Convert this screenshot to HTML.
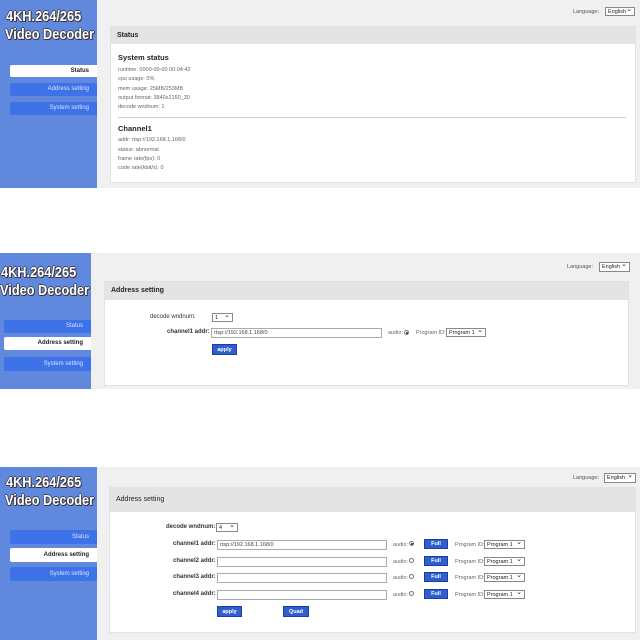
<!DOCTYPE html>
<html><head><meta charset="utf-8"><style>
*{margin:0;padding:0;box-sizing:border-box}
body{width:640px;height:640px;background:#fff;position:relative;overflow:hidden;font-family:"Liberation Sans",Arial,sans-serif;color:#333}
.a{position:absolute}
.shot{position:absolute;left:0;width:640px;background:#f0f0f0}
.side{position:absolute;left:0;top:0;bottom:0;background:#6088dc}
.ttl{position:absolute;color:#fff;font-weight:bold;font-size:14.5px;white-space:nowrap;transform:scaleX(0.88);transform-origin:0 0;text-shadow:1px 1px 0 #334,-1px 0 0 #445,0 -1px 0 #445,1px 0 0 #445,0 1px 0 #445}
.nav{position:absolute;background:#3d72e8;color:#dbe6ff;font-size:6px;text-align:right;padding-right:8px;border-radius:2px 0 0 2px}
.nav.on{background:#fff;color:#222;font-weight:bold}
.panel{position:absolute;background:#fff;border:1px solid #e2e2e2}
.hd{position:absolute;left:0;right:0;top:0;background:#e4e4e4;font-size:7px;font-weight:bold;color:#222;padding-left:6px}
.t{position:absolute;font-size:5.5px;color:#666;white-space:nowrap}
.lab{position:absolute;font-size:6px;color:#333;white-space:nowrap;text-align:right}
.inp{position:absolute;border:1px solid #aaa;background:#fff;font-size:5.5px;color:#444;padding-left:2px;line-height:8px}
.sel{position:absolute;border:1px solid #888;background:#fff;font-size:5.5px;color:#222;padding-left:2px;line-height:8px}
.sel:after{content:"⌄";position:absolute;right:2px;top:-2px;font-size:7px}
.btn{position:absolute;background:#2f5fcf;color:#fff;font-size:5.5px;font-weight:bold;text-align:center;border:1px solid #1d3f9a}
.rad{position:absolute;width:5px;height:5px;border:1px solid #777;border-radius:50%;background:#fff}
.rad.on:after{content:"";position:absolute;left:1px;top:1px;width:2px;height:2px;background:#222;border-radius:50%}
</style></head><body>

<!-- shot 1 -->
<div class="shot" style="top:0;height:188px">
 <div class="side" style="width:97px"></div>
 <div class="ttl" style="left:6px;top:9px">4KH.264/265</div>
 <div class="ttl" style="left:5px;top:27px">Video Decoder</div>
 <div class="nav on" style="left:10px;top:65px;width:87px;height:12px;line-height:12px">Status</div>
 <div class="nav" style="left:10px;top:83px;width:87px;height:13px;line-height:13px">Address setting</div>
 <div class="nav" style="left:10px;top:102px;width:87px;height:13px;line-height:13px">System setting</div>
 <div class="t" style="left:573px;top:9px;color:#555">Language:</div>
 <div class="sel" style="left:605px;top:7px;width:30px;height:9px">English</div>
 <div class="panel" style="left:110px;top:26px;width:526px;height:157px">
  <div class="hd" style="height:17px;line-height:17px">Status</div>
 </div>
 <div class="a" style="left:118px;top:53px;font-size:7.5px;font-weight:bold;color:#222">System status</div>
 <div class="t" style="left:118px;top:67px">runtime: 0000-00-00 00:04:42</div>
 <div class="t" style="left:118px;top:76px">cpu usage: 0%</div>
 <div class="t" style="left:118px;top:86px">mem usage: 25MB/253MB</div>
 <div class="t" style="left:118px;top:95px">output format: 3840x2160_30</div>
 <div class="t" style="left:118px;top:104px">decode wndnum: 1</div>
 <div class="a" style="left:118px;top:117px;width:508px;height:1px;background:#ccc"></div>
 <div class="a" style="left:118px;top:124px;font-size:7.5px;font-weight:bold;color:#222">Channel1</div>
 <div class="t" style="left:118px;top:137px">addr: rtsp://192.168.1.168/0</div>
 <div class="t" style="left:118px;top:147px">status: abnormal</div>
 <div class="t" style="left:118px;top:156px">frame rate(fps): 0</div>
 <div class="t" style="left:118px;top:165px">code rate(kbit/s): 0</div>
</div>

<!-- shot 2 -->
<div class="shot" style="top:253px;height:136px">
 <div class="side" style="width:91px"></div>
 <div class="ttl" style="left:1px;top:12px">4KH.264/265</div>
 <div class="ttl" style="left:0px;top:30px">Video Decoder</div>
 <div class="nav" style="left:4px;top:67px;width:87px;height:13px;line-height:13px">Status</div>
 <div class="nav on" style="left:4px;top:84px;width:87px;height:13px;line-height:13px">Address setting</div>
 <div class="nav" style="left:4px;top:104px;width:87px;height:14px;line-height:14px">System setting</div>
 <div class="t" style="left:567px;top:11px;color:#555">Language:</div>
 <div class="sel" style="left:599px;top:9px;width:31px;height:10px">English</div>
 <div class="panel" style="left:104px;top:28px;width:525px;height:105px">
  <div class="hd" style="height:18px;line-height:18px">Address setting</div>
 </div>
 <div class="lab" style="left:150px;top:61px">decode wndnum:</div>
 <div class="sel" style="left:212px;top:60px;width:21px;height:9px">1</div>
 <div class="lab" style="left:167px;top:76px;font-weight:bold">channel1 addr:</div>
 <div class="inp" style="left:211px;top:75px;width:171px;height:10px">rtsp://192.168.1.168/0</div>
 <div class="t" style="left:388px;top:77px">audio:</div>
 <div class="rad on" style="left:404px;top:77px"></div>
 <div class="t" style="left:416px;top:77px">Program ID:</div>
 <div class="sel" style="left:446px;top:75px;width:40px;height:9px">Program 1</div>
 <div class="btn" style="left:212px;top:91px;width:25px;height:11px;line-height:10px">apply</div>
</div>

<!-- shot 3 -->
<div class="shot" style="top:467px;height:173px">
 <div class="side" style="width:97px"></div>
 <div class="ttl" style="left:6px;top:8px">4KH.264/265</div>
 <div class="ttl" style="left:5px;top:26px">Video Decoder</div>
 <div class="nav" style="left:10px;top:63px;width:87px;height:14px;line-height:14px">Status</div>
 <div class="nav on" style="left:10px;top:81px;width:87px;height:14px;line-height:14px">Address setting</div>
 <div class="nav" style="left:10px;top:100px;width:87px;height:14px;line-height:14px">System setting</div>
 <div class="t" style="left:573px;top:8px;color:#555">Language:</div>
 <div class="sel" style="left:604px;top:6px;width:32px;height:10px">English</div>
 <div class="panel" style="left:109px;top:20px;width:527px;height:146px">
  <div class="hd" style="height:24px;line-height:24px;font-weight:normal;color:#222">Address setting</div>
 </div>
 <div class="lab" style="left:166px;top:57px;font-weight:bold">decode wndnum:</div>
 <div class="sel" style="left:216px;top:56px;width:22px;height:9px">4</div>

 <div class="lab" style="left:173px;top:74px;font-weight:bold">channel1 addr:</div>
 <div class="inp" style="left:217px;top:73px;width:170px;height:10px">rtsp://192.168.1.168/0</div>
 <div class="t" style="left:393px;top:75px">audio:</div>
 <div class="rad on" style="left:409px;top:74px"></div>
 <div class="btn" style="left:424px;top:72px;width:24px;height:10px;line-height:9px">Full</div>
 <div class="t" style="left:455px;top:75px">Program ID:</div>
 <div class="sel" style="left:484px;top:73px;width:41px;height:9px">Program 1</div>

 <div class="lab" style="left:173px;top:91px;font-weight:bold">channel2 addr:</div>
 <div class="inp" style="left:217px;top:90px;width:170px;height:10px"></div>
 <div class="t" style="left:393px;top:92px">audio:</div>
 <div class="rad" style="left:409px;top:91px"></div>
 <div class="btn" style="left:424px;top:89px;width:24px;height:10px;line-height:9px">Full</div>
 <div class="t" style="left:455px;top:92px">Program ID:</div>
 <div class="sel" style="left:484px;top:90px;width:41px;height:9px">Program 1</div>

 <div class="lab" style="left:173px;top:107px;font-weight:bold">channel3 addr:</div>
 <div class="inp" style="left:217px;top:106px;width:170px;height:10px"></div>
 <div class="t" style="left:393px;top:108px">audio:</div>
 <div class="rad" style="left:409px;top:107px"></div>
 <div class="btn" style="left:424px;top:105px;width:24px;height:10px;line-height:9px">Full</div>
 <div class="t" style="left:455px;top:108px">Program ID:</div>
 <div class="sel" style="left:484px;top:106px;width:41px;height:9px">Program 1</div>

 <div class="lab" style="left:173px;top:124px;font-weight:bold">channel4 addr:</div>
 <div class="inp" style="left:217px;top:123px;width:170px;height:10px"></div>
 <div class="t" style="left:393px;top:125px">audio:</div>
 <div class="rad" style="left:409px;top:124px"></div>
 <div class="btn" style="left:424px;top:122px;width:24px;height:10px;line-height:9px">Full</div>
 <div class="t" style="left:455px;top:125px">Program ID:</div>
 <div class="sel" style="left:484px;top:123px;width:41px;height:9px">Program 1</div>

 <div class="btn" style="left:217px;top:139px;width:25px;height:11px;line-height:10px">apply</div>
 <div class="btn" style="left:283px;top:139px;width:26px;height:11px;line-height:10px">Quad</div>
</div>
</body></html>
